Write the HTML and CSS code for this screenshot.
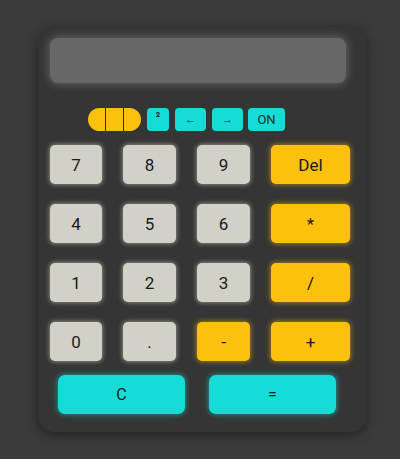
FILE: index.html
```html
<!DOCTYPE html>
<html>
<head>
<meta charset="utf-8">
<link rel="stylesheet" href="styles.css">
</head>
<body>
<div class="calc">
  <div class="display"></div>
  <div class="toolbar">
    <div class="pill">
      <span class="seg seg-l"></span><span class="seg"></span><span class="seg seg-r"></span>
    </div>
    <button class="tool sq">²</button>
    <button class="tool arrow">←</button>
    <button class="tool arrow">→</button>
    <button class="tool on">ON</button>
  </div>
  <div class="keys">
    <button class="key num">7</button>
    <button class="key num">8</button>
    <button class="key num">9</button>
    <button class="key op">Del</button>
    <button class="key num">4</button>
    <button class="key num">5</button>
    <button class="key num">6</button>
    <button class="key op">*</button>
    <button class="key num">1</button>
    <button class="key num">2</button>
    <button class="key num">3</button>
    <button class="key op">/</button>
    <button class="key num">0</button>
    <button class="key num">.</button>
    <button class="key op">-</button>
    <button class="key op">+</button>
  </div>
  <div class="bottom">
    <button class="key wide">C</button>
    <button class="key wide">=</button>
  </div>
</div>
</body>
</html>
```
FILE: styles.css
```css
html, body {
  margin: 0;
  padding: 0;
}
body {
  width: 400px;
  height: 459px;
  background: #3b3b3b;
  font-family: Roboto, "Liberation Sans", sans-serif;
  overflow: hidden;
  padding-top: 27px;
  padding-left: 38px;
  box-sizing: border-box;
}
button {
  font-family: inherit;
  border: none;
  padding: 0;
  margin: 0;
  cursor: pointer;
}
.calc {
  width: 328px;
  height: 405px;
  box-sizing: border-box;
  background: #353535;
  border-radius: 15px;
  box-shadow: 0 3px 12px rgba(0,0,0,0.45);
  padding: 11px 0 0 12px;
}
.display {
  width: 296px;
  height: 45px;
  background: #676767;
  border-radius: 8px;
  box-shadow: 0 0 10px 1px rgba(150,150,150,0.5);
}
.toolbar {
  display: flex;
  align-items: center;
  margin-top: 25px;
  margin-left: 38px;
  height: 23px;
}
.pill {
  display: flex;
  gap: 1px;
  height: 23px;
  background: #2a2a2a;
  border-radius: 12px;
}
.seg {
  width: 17px;
  height: 23px;
  background: #fcc10c;
}
.seg-l { border-radius: 12px 0 0 12px; }
.seg-r { border-radius: 0 12px 12px 0; }
.tool {
  height: 23px;
  background: #16dcd8;
  border-radius: 4px;
  color: #1d2b2b;
  margin-left: 6px;
}
.sq {
  width: 22px;
  font-size: 12px;
  font-weight: bold;
  line-height: 14px;
  display: flex;
  justify-content: center;
  align-items: flex-start;
  padding-top: 2px;
  box-sizing: border-box;
}
.arrow {
  width: 31px;
  font-size: 11px;
}
.on {
  width: 37px;
  font-size: 13px;
  margin-left: 5px;
}
.keys {
  display: grid;
  grid-template-columns: 52px 53px 53px 79px;
  grid-auto-rows: 39px;
  column-gap: 21px;
  row-gap: 20px;
  margin-top: 14px;
}
.key {
  font-size: 17px;
  color: #1a1a1a;
  border-radius: 5px;
}
.num {
  background: #d1d1c7;
  box-shadow: 0 0 4px 1px rgba(200,200,190,0.55);
}
.op {
  background: #fcc10c;
  box-shadow: 0 0 5px 1px rgba(252,193,12,0.5);
}
.bottom {
  display: flex;
  gap: 24px;
  margin-top: 14px;
  margin-left: 8px;
}
.wide {
  width: 127px;
  height: 39px;
  background: #16dcd8;
  border-radius: 7px;
  font-size: 16px;
  box-shadow: 0 0 5px 1px rgba(22,220,216,0.5);
}
```
